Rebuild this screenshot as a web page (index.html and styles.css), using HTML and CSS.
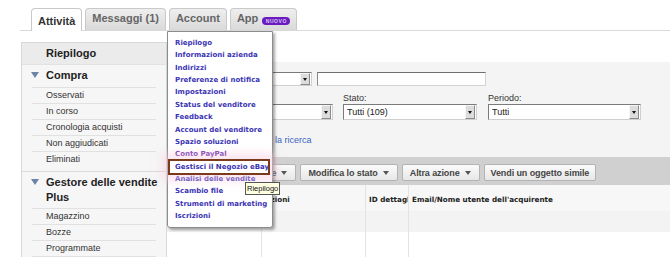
FILE: index.html
```html
<!DOCTYPE html>
<html lang="it">
<head>
<meta charset="utf-8">
<title>Attività</title>
<link rel="stylesheet" href="styles.css">
</head>
<body>
<div class="page">
  <nav class="tabs">
    <div class="tab tab-active">Attività</div>
    <div class="tab">Messaggi (1)</div>
    <div class="tab">Account</div>
    <div class="tab">App <span class="badge">NUOVO</span></div>
  </nav>

  <div class="layout">
    <aside class="sidebar">
      <div class="side-head">Riepilogo</div>
      <div class="side-section">
        <div class="side-title"><span class="tri"></span><span>Compra</span></div>
        <ul class="side-list">
          <li>Osservati</li>
          <li>In corso</li>
          <li>Cronologia acquisti</li>
          <li>Non aggiudicati</li>
          <li>Eliminati</li>
        </ul>
      </div>
      <div class="side-section side-section-sep">
        <div class="side-title"><span class="tri"></span><span>Gestore delle vendite Plus</span></div>
        <ul class="side-list side-list-closed">
          <li>Magazzino</li>
          <li>Bozze</li>
          <li>Programmate</li>
        </ul>
      </div>
    </aside>

    <main class="main">
      <section class="filters">
        <div class="frow">
          <div class="select sel-a"><span class="sel-text">Titolo</span><span class="sel-btn"></span></div>
          <div class="textbox"></div>
        </div>
        <div class="frow2">
          <div class="field f1">
            <label class="flabel">Formato:</label>
            <div class="select sel-b"><span class="sel-text">Tutti</span><span class="sel-btn"></span></div>
          </div>
          <div class="field f2">
            <label class="flabel">Stato:</label>
            <div class="select sel-b"><span class="sel-text">Tutti (109)</span><span class="sel-btn"></span></div>
          </div>
          <div class="field f3">
            <label class="flabel">Periodo:</label>
            <div class="select sel-b"><span class="sel-text">Tutti</span><span class="sel-btn"></span></div>
          </div>
        </div>
        <a class="flink" href="#">Salva la ricerca</a>
      </section>

      <div class="actions">
        <button class="btn btn-menu">Stampa etichette<span class="caret"></span></button>
        <button class="btn btn-menu">Modifica lo stato<span class="caret"></span></button>
        <button class="btn btn-menu">Altra azione<span class="caret"></span></button>
        <button class="btn">Vendi un oggetto simile</button>
      </div>

      <div class="grid">
        <div class="cell head"></div>
        <div class="cell head">Azioni</div>
        <div class="cell head">ID dettaglio</div>
        <div class="cell head">Email/Nome utente dell'acquirente</div>
        <div class="cell row1"></div>
        <div class="cell row1"></div>
        <div class="cell row1"></div>
        <div class="cell row1"></div>
        <div class="cell row2"></div>
        <div class="cell row2"></div>
        <div class="cell row2"></div>
        <div class="cell row2"></div>
      </div>
    </main>
  </div>

  <div class="menu">
    <a class="mitem" href="#">Riepilogo</a>
    <a class="mitem" href="#">Informazioni azienda</a>
    <a class="mitem" href="#">Indirizzi</a>
    <a class="mitem" href="#">Preferenze di notifica</a>
    <a class="mitem" href="#">Impostazioni</a>
    <a class="mitem" href="#">Status del venditore</a>
    <a class="mitem" href="#">Feedback</a>
    <a class="mitem" href="#">Account del venditore</a>
    <a class="mitem" href="#">Spazio soluzioni</a>
    <a class="mitem mitem-visited" href="#">Conto PayPal</a>
    <a class="mitem mitem-hl" href="#">Gestisci il Negozio eBay</a>
    <a class="mitem" href="#">Analisi delle vendite</a>
    <a class="mitem" href="#">Scambio file</a>
    <a class="mitem" href="#">Strumenti di marketing</a>
    <a class="mitem" href="#">Iscrizioni</a>
  </div>

  <div class="tooltip">Riepilogo</div>
</div>
</body>
</html>
```

FILE: styles.css
```css
* { box-sizing: border-box; }

body {
  margin: 0;
  width: 670px;
  height: 257px;
  overflow: hidden;
  background: #fff;
  font-family: "Liberation Sans", Arial, sans-serif;
  color: #333;
}

.page {
  position: relative;
  width: 670px;
  height: 257px;
  overflow: hidden;
}

/* ---------- tabs ---------- */
.tabs {
  display: flex;
  align-items: flex-end;
  gap: 3px;
  height: 31px;
  margin-left: 20px;
  padding: 8px 0 0 11px;
  border-bottom: 1px solid #d9d9d9;
}

.tab {
  height: 22px;
  padding: 2px 6px 0;
  border: 1px solid #c9c9c9;
  border-bottom: 0;
  border-radius: 4px 4px 0 0;
  background: linear-gradient(#efefef, #d9d9d9);
  font-size: 11px;
  font-weight: bold;
  line-height: 14px;
  color: #666;
  white-space: nowrap;
}

.tab-active {
  height: 23px;
  margin-bottom: -1px;
  padding-top: 5px;
  background: #fff;
  color: #333;
}

.badge {
  display: inline-block;
  width: 28px;
  height: 8px;
  margin-left: 1px;
  border-radius: 4px;
  background: #6a1bbf;
  color: #d9c6f2;
  font-size: 5px;
  line-height: 8px;
  letter-spacing: 0.6px;
  text-align: center;
  vertical-align: -1px;
}

/* ---------- layout ---------- */
.layout {
  display: flex;
  height: 226px;
}

.sidebar {
  flex: 0 0 146px;
  width: 146px;
  margin: 11px 0 0 21px;
  border: 1px solid #d9d9d9;
  border-bottom: 0;
  background: #f6f6f6;
}

.side-head {
  height: 22px;
  padding-left: 24px;
  background: #ebebeb;
  border-bottom: 1px solid #e2e2e2;
  font-size: 11px;
  font-weight: bold;
  line-height: 21px;
  color: #222;
}

.side-title {
  display: flex;
  align-items: flex-start;
  padding: 3px 3px 4px 9px;
  font-size: 11px;
  font-weight: bold;
  line-height: 15px;
  color: #222;
}

.tri {
  flex: 0 0 auto;
  width: 0;
  height: 0;
  margin: 4px 7px 0 0;
  border-left: 4px solid transparent;
  border-right: 4px solid transparent;
  border-top: 6px solid #6b84a8;
}

.side-section-sep {
  margin-top: 4px;
  border-top: 1px solid #d9d9d9;
}

.side-section-sep .side-title {
  padding-bottom: 3px;
}

.side-list {
  list-style: none;
  margin: 0 10px;
  padding: 0;
}

.side-list li {
  height: 16px;
  padding-left: 14px;
  border-top: 1px solid #e1e1e1;
  font-size: 9px;
  line-height: 15px;
  color: #333;
}

.side-list-closed {
  border-bottom: 1px solid #e1e1e1;
}

/* ---------- main ---------- */
.main {
  flex: 1;
  min-width: 0;
  display: flex;
  flex-direction: column;
}

.main > * { flex: none; }

.filters {
  height: 95px;
  margin-top: 31px;
  padding: 10px 0 0 16px;
  background: #f4f4f4;
}

.frow {
  display: flex;
  gap: 5px;
  height: 14px;
}

.select {
  position: relative;
  display: flex;
  align-items: center;
  height: 14px;
  padding-left: 3px;
  background: #fff;
  border: 1px solid;
  border-color: #7b7b7b #cfcfcf #cfcfcf #7b7b7b;
  font-size: 9px;
  color: #222;
}

.sel-text {
  flex: 1;
  overflow: hidden;
  white-space: nowrap;
}

.sel-btn {
  position: relative;
  flex: 0 0 10px;
  width: 10px;
  height: 100%;
  margin-right: 1px;
  background: #dcdcdc;
  border: 1px solid;
  border-color: #f6f6f6 #8a8a8a #8a8a8a #f6f6f6;
}

.sel-btn::after {
  content: "";
  position: absolute;
  left: 2px;
  top: 4px;
  border-left: 2px solid transparent;
  border-right: 2px solid transparent;
  border-top: 3px solid #111;
}

.sel-a { width: 129px; }
.sel-b { height: 16px; }
.sel-b .sel-btn::after { top: 5px; }

.textbox {
  width: 169px;
  height: 14px;
  background: #fff;
  border: 1px solid;
  border-color: #6f6f6f #d3d3d3 #d3d3d3 #8a8a8a;
}

.frow2 {
  display: flex;
  margin-top: 6px;
}

.field {
  display: flex;
  flex-direction: column;
}

.flabel {
  height: 12px;
  font-size: 9px;
  line-height: 12px;
  color: #333;
}

.f1 { width: 150px; margin-right: 10px; }
.f2 { width: 134px; margin-right: 11px; }
.f3 { width: 153px; }

.flink {
  display: block;
  margin: 14px 0 0 67px;
  font-size: 9px;
  line-height: 12px;
  color: #3a63c4;
  text-decoration: none;
}

.actions {
  display: flex;
  gap: 4px;
  height: 28px;
  padding: 7px 0 0 31px;
  background: #d0d0d0;
}

.btn {
  display: flex;
  align-items: center;
  height: 17px;
  padding: 0 6px;
  border: 1px solid #b3b3b3;
  border-radius: 2px;
  background: linear-gradient(#fbfbfb, #e7e7e7);
  font-family: "Liberation Sans", Arial, sans-serif;
  font-size: 9px;
  font-weight: bold;
  letter-spacing: -0.1px;
  color: #444;
  white-space: nowrap;
}

.btn-menu { padding: 0 8px 0 7px; }

.caret {
  width: 0;
  height: 0;
  margin-left: 5px;
  border-left: 3.5px solid transparent;
  border-right: 3.5px solid transparent;
  border-top: 4px solid #555;
}

.grid {
  display: grid;
  grid-template-columns: 94px 104px 43px 1fr;
}

.cell {
  overflow: hidden;
  white-space: nowrap;
  border-left: 1px solid #e3e3e3;
}

.cell:nth-child(4n+1) { border-left: 0; }

.head {
  height: 26px;
  padding: 10px 0 0 3px;
  background: #f7f7f7;
  font-family: "DejaVu Sans", sans-serif;
  font-size: 7.2px;
  font-weight: bold;
  line-height: 9px;
  color: #222;
}

.row1 {
  height: 21px;
  background: #f3f3f3;
}

.row2 {
  height: 40px;
  background: #fff;
}

/* ---------- dropdown menu ---------- */
.menu {
  position: absolute;
  left: 167px;
  top: 31px;
  width: 106px;
  height: 197px;
  padding-top: 5px;
  background: #fff;
  border: 1px solid #8c8c8c;
  border-radius: 0 0 3px 3px;
  box-shadow: 2px 2px 3px rgba(0, 0, 0, 0.35);
}

.mitem {
  display: block;
  height: 12.36px;
  margin: 0 4px 0 2px;
  padding-left: 5px;
  font-family: "DejaVu Sans", sans-serif;
  font-size: 7px;
  font-weight: bold;
  line-height: 12.36px;
  color: #3b34b4;
  text-decoration: none;
  white-space: nowrap;
}

.mitem-visited { color: #6a2cae; }

.mitem-hl {
  position: relative;
  outline: 2px solid #7b3a1a;
  box-shadow: 0 0 8px 8px rgba(250, 205, 225, 0.5);
}

.tooltip {
  position: absolute;
  left: 245px;
  top: 182px;
  height: 13px;
  padding: 0 1px;
  background: #ffffe1;
  border: 1px solid #555;
  font-family: "Liberation Sans", Arial, sans-serif;
  font-size: 7.5px;
  line-height: 11px;
  color: #111;
}
```
